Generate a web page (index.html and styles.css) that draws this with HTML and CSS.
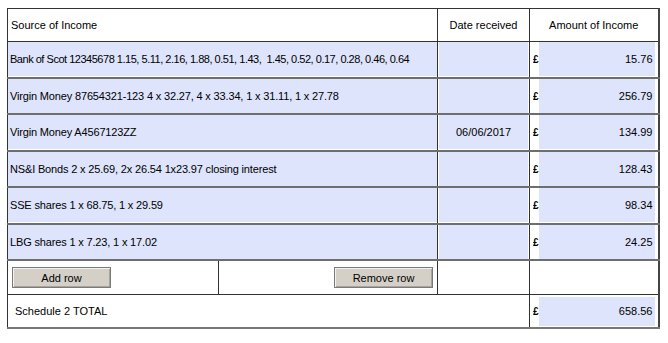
FILE: index.html
```html
<!DOCTYPE html>
<html>
<head>
<meta charset="utf-8">
<link rel="stylesheet" href="styles.css">
</head>
<body>
<table class="sched">
  <colgroup>
    <col class="c-a"><col class="c-b"><col class="c-date"><col class="c-amt">
  </colgroup>
  <tr class="head">
    <td colspan="2" class="src-h">Source of Income</td>
    <td class="ctr">Date received</td>
    <td class="ctr">Amount of Income</td>
  </tr>
  <tr class="data">
    <td colspan="2"><div class="field src dense">Bank of Scot 12345678 1.15, 5.11, 2.16, 1.88, 0.51, 1.43,  1.45, 0.52, 0.17, 0.28, 0.46, 0.64</div></td>
    <td><div class="field date"></div></td>
    <td><div class="amt"><span class="gbp">£</span><div class="field num">15.76</div></div></td>
  </tr>
  <tr class="data">
    <td colspan="2"><div class="field src">Virgin Money 87654321-123 4 x 32.27, 4 x 33.34, 1 x 31.11, 1 x 27.78</div></td>
    <td><div class="field date"></div></td>
    <td><div class="amt"><span class="gbp">£</span><div class="field num">256.79</div></div></td>
  </tr>
  <tr class="data">
    <td colspan="2"><div class="field src">Virgin Money A4567123ZZ</div></td>
    <td><div class="field date">06/06/2017</div></td>
    <td><div class="amt"><span class="gbp">£</span><div class="field num">134.99</div></div></td>
  </tr>
  <tr class="data">
    <td colspan="2"><div class="field src">NS&amp;I Bonds 2 x 25.69, 2x 26.54 1x23.97 closing interest</div></td>
    <td><div class="field date"></div></td>
    <td><div class="amt"><span class="gbp">£</span><div class="field num">128.43</div></div></td>
  </tr>
  <tr class="data">
    <td colspan="2"><div class="field src">SSE shares 1 x 68.75, 1 x 29.59</div></td>
    <td><div class="field date"></div></td>
    <td><div class="amt"><span class="gbp">£</span><div class="field num">98.34</div></div></td>
  </tr>
  <tr class="data">
    <td colspan="2"><div class="field src">LBG shares 1 x 7.23, 1 x 17.02</div></td>
    <td><div class="field date"></div></td>
    <td><div class="amt"><span class="gbp">£</span><div class="field num">24.25</div></div></td>
  </tr>
  <tr class="btns">
    <td class="left-btn"><button class="btn add">Add row</button></td>
    <td class="right-btn"><button class="btn remove">Remove row</button></td>
    <td></td>
    <td></td>
  </tr>
  <tr class="total">
    <td colspan="3" class="total-label">Schedule 2 TOTAL</td>
    <td><div class="amt"><span class="gbp tot">£</span><div class="field num">658.56</div></div></td>
  </tr>
</table>
</body>
</html>
```
FILE: styles.css
```css
html, body {
  margin: 0;
  padding: 0;
  background: #ffffff;
}
body {
  padding: 8px 0 0 7px;
  font-family: "Liberation Sans", Arial, sans-serif;
  font-size: 11px;
  color: #000;
}
.sched {
  border-collapse: collapse;
  table-layout: fixed;
  width: 651px;
  border-top: 1px solid #222;
  border-left: 1px solid #222;
  border-right: 2px solid #444;
  border-bottom: 2px solid #777;
}
.c-a { width: 211px; }
.c-b { width: 219px; }
.c-date { width: 92px; }
.c-amt { width: 129px; }
.sched td {
  border: 1px solid #333;
  padding: 0;
  vertical-align: middle;
}
.head td {
  height: 32px;
}
.src-h {
  padding-left: 3px !important;
}
.ctr {
  text-align: center;
}
.data td {
  height: 34.5px;
  border-bottom: 2px solid #6e6e6e;
}
.field {
  background: #dde4fb;
  height: 34px;
  line-height: 34px;
  white-space: pre;
  overflow: hidden;
}
.src {
  padding-left: 2px;
  letter-spacing: -0.16px;
}
.src.dense {
  letter-spacing: -0.48px;
}
.date {
  margin: 0 1px;
  text-align: center;
}
.amt {
  display: flex;
  align-items: stretch;
  padding-left: 3px;
  padding-right: 3px;
}
.gbp {
  display: block;
  width: 6px;
  flex: 0 0 6px;
  font-size: 10px;
  height: 34px;
  line-height: 35px;
  overflow: hidden;
  font-weight: bold;
}
.gbp.tot {
  height: 29px;
  line-height: 30px;
}
.num {
  flex: 1;
  text-align: right;
  padding-right: 2px;
}
.btns td {
  height: 33px;
}
.left-btn {
  padding-left: 4px !important;
}
.right-btn {
  text-align: right;
  padding-right: 4px !important;
}
.btn {
  font-family: "Liberation Sans", Arial, sans-serif;
  font-size: 11px;
  color: #000;
  background: #d4d0c8;
  border: 1px solid #7a7a7a;
  box-shadow: inset 1px 1px 0 #f4f2ee, inset -1px -1px 0 #a8a49c;
  width: 99px;
  height: 21px;
  padding: 0;
  margin: 0;
  vertical-align: middle;
}
.total td {
  height: 32px;
}
.total-label {
  padding-left: 7px !important;
}
.total .field {
  height: 29px;
  line-height: 29px;
}
```
